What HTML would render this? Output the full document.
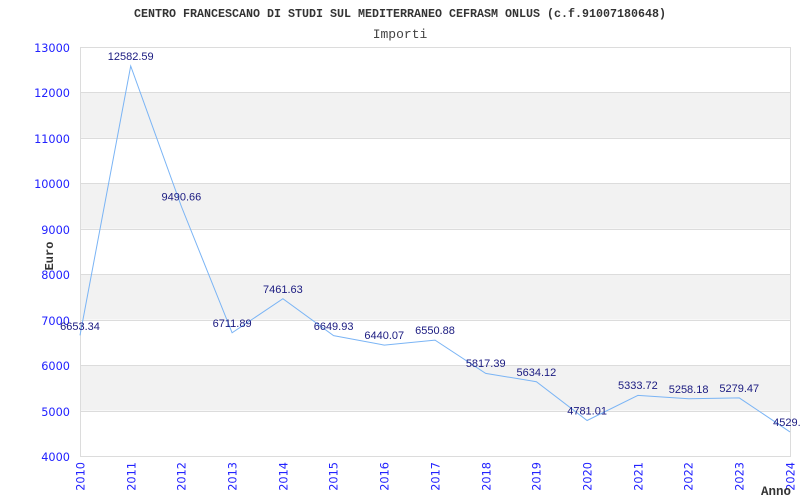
<!DOCTYPE html>
<html><head><meta charset="utf-8"><style>
html,body{margin:0;padding:0;background:#fff;width:800px;height:500px;overflow:hidden}
svg{display:block}
.t{font-family:"Liberation Mono","DejaVu Sans Mono",monospace}
.ax{font-family:"DejaVu Sans","Liberation Sans",sans-serif;font-size:11.3px;fill:#2222ff}
.lb{font-family:"Liberation Sans",sans-serif;font-size:11px;fill:#1a1a80}
</style></head><body>
<svg width="800" height="500" viewBox="0 0 800 500">
<rect x="80.5" y="92.4" width="709.5" height="45.4" fill="#f2f2f2"/>
<rect x="80.5" y="183.3" width="709.5" height="45.4" fill="#f2f2f2"/>
<rect x="80.5" y="274.2" width="709.5" height="45.4" fill="#f2f2f2"/>
<rect x="80.5" y="365.1" width="709.5" height="45.4" fill="#f2f2f2"/>
<g stroke="#dcdcdc" stroke-width="1">
<line x1="80" y1="47.5" x2="790" y2="47.5"/>
<line x1="80" y1="92.5" x2="790" y2="92.5"/>
<line x1="80" y1="138.5" x2="790" y2="138.5"/>
<line x1="80" y1="183.5" x2="790" y2="183.5"/>
<line x1="80" y1="229.5" x2="790" y2="229.5"/>
<line x1="80" y1="274.5" x2="790" y2="274.5"/>
<line x1="80" y1="320.5" x2="790" y2="320.5"/>
<line x1="80" y1="365.5" x2="790" y2="365.5"/>
<line x1="80" y1="411.5" x2="790" y2="411.5"/>
<line x1="80" y1="456.5" x2="790" y2="456.5"/>
<line x1="80.5" y1="47" x2="80.5" y2="457"/>
<line x1="790.5" y1="47" x2="790.5" y2="457"/>
</g>
<polyline fill="none" stroke="#7ab4f5" stroke-width="1" points="80,335.4 130.7,66 181.4,206.5 232.1,332.8 282.9,298.7 333.6,335.6 384.3,345.1 435,340.1 485.7,373.4 536.4,381.7 587.1,420.5 637.9,395.4 688.6,398.8 739.3,397.9 790,431.9"/>
<text class="t" x="400" y="17" text-anchor="middle" font-size="11.7" font-weight="bold" fill="#333" textLength="532" lengthAdjust="spacingAndGlyphs">CENTRO FRANCESCANO DI STUDI SUL MEDITERRANEO CEFRASM ONLUS (c.f.91007180648)</text>
<text class="t" x="400" y="38" text-anchor="middle" font-size="13" fill="#444">Importi</text>
<g class="ax" text-anchor="end">
<text x="70" y="52">13000</text><text x="70" y="97">12000</text><text x="70" y="143">11000</text><text x="70" y="188">10000</text><text x="70" y="234">9000</text><text x="70" y="279">8000</text><text x="70" y="325">7000</text><text x="70" y="370">6000</text><text x="70" y="416">5000</text><text x="70" y="461">4000</text>
</g>
<g class="ax" text-anchor="end">
<text transform="translate(84.5,462) rotate(-90)">2010</text>
<text transform="translate(135.5,462) rotate(-90)">2011</text>
<text transform="translate(185.5,462) rotate(-90)">2012</text>
<text transform="translate(236.5,462) rotate(-90)">2013</text>
<text transform="translate(287.5,462) rotate(-90)">2014</text>
<text transform="translate(337.5,462) rotate(-90)">2015</text>
<text transform="translate(388.5,462) rotate(-90)">2016</text>
<text transform="translate(439.5,462) rotate(-90)">2017</text>
<text transform="translate(490.5,462) rotate(-90)">2018</text>
<text transform="translate(540.5,462) rotate(-90)">2019</text>
<text transform="translate(591.5,462) rotate(-90)">2020</text>
<text transform="translate(642.5,462) rotate(-90)">2021</text>
<text transform="translate(692.5,462) rotate(-90)">2022</text>
<text transform="translate(743.5,462) rotate(-90)">2023</text>
<text transform="translate(794.5,462) rotate(-90)">2024</text>
</g>
<text class="t" transform="translate(53,256) rotate(-90)" text-anchor="middle" font-size="12" font-weight="bold" fill="#333">Euro</text>
<text class="t" x="761" y="495" font-size="12.5" font-weight="bold" fill="#333">Anno</text>
<g class="lb" text-anchor="middle" dominant-baseline="middle">
<text x="80" y="327">6653.34</text>
<text x="130.7" y="57">12582.59</text>
<text x="181.4" y="197.5">9490.66</text>
<text x="232.1" y="324">6711.89</text>
<text x="282.9" y="290">7461.63</text>
<text x="333.6" y="327">6649.93</text>
<text x="384.3" y="336">6440.07</text>
<text x="435" y="331">6550.88</text>
<text x="485.7" y="364">5817.39</text>
<text x="536.4" y="373">5634.12</text>
<text x="587.1" y="411.5">4781.01</text>
<text x="637.9" y="386">5333.72</text>
<text x="688.6" y="390">5258.18</text>
<text x="739.3" y="389">5279.47</text>
<text x="790" y="423">4529.3</text>
</g>
</svg>
</body></html>
